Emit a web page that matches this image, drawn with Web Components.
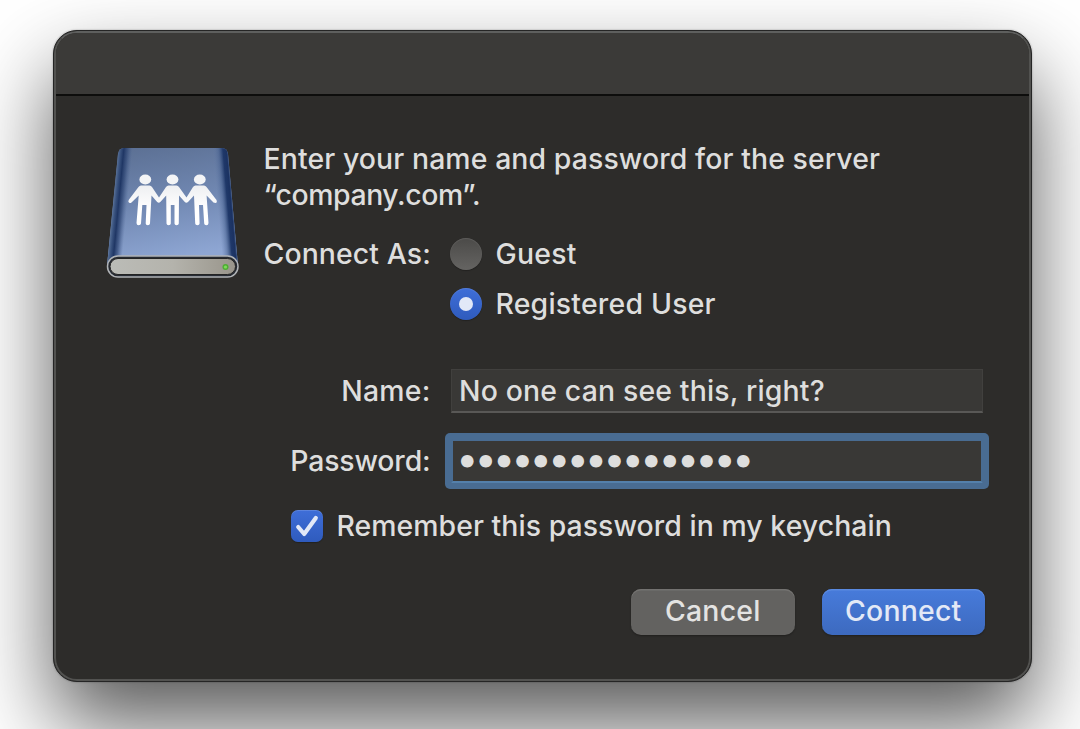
<!DOCTYPE html>
<html lang="en">
<head>
<meta charset="utf-8">
<title>Connect to Server</title>
<style>
html, body {
  margin: 0;
  width: 1080px;
  height: 729px;
  overflow: hidden;
  background: #fff;
}

body {
  font-family: Inter, "Liberation Sans", sans-serif;
  font-size: 28.4px;
  font-weight: 450;
  line-height: 36px;
  letter-spacing: .22px;
  color: #dededd;
  display: flex;
  align-items: flex-start;
}
</style>
</head>
<body>

<auth-dialog>
  <server-icon slot="icon"></server-icon>
  <div slot="message">
    <text-line style="--track: .1px">Enter your name and password for the server</text-line>
    <text-line style="--track: -.4px">“company.com”.</text-line>
  </div>
  <form-row label="Connect As:" style="--row: 50px; --label-track: .1px">
    <radio-option>Guest</radio-option>
  </form-row>
  <form-row style="--row: 50px">
    <radio-option checked>Registered User</radio-option>
  </form-row>
  <form-row label="Name:" style="--row: 44px; margin-top: 40px">
    <text-field>No one can see this, right?</text-field>
  </form-row>
  <form-row label="Password:" style="--row: 44px; --label-track: -.15px; margin-top: 26px">
    <text-field focused secure>••••••••••••••••</text-field>
  </form-row>
  <check-option>Remember this password in my keychain</check-option>
  <push-button slot="actions">Cancel</push-button>
  <push-button slot="actions" primary>Connect</push-button>
</auth-dialog>

<script>
// attach an open shadow root with the given markup
class BaseElement extends HTMLElement {
  constructor() {
    super();
    this.attachShadow({ mode: "open" });
    const template = document.createElement("template");
    template.innerHTML = this.constructor.markup;
    this.shadowRoot.appendChild(template.content.cloneNode(true));
  }
}

class AuthDialog extends BaseElement {
  static markup = `
<style>
:host {
  display: flex;
  flex-direction: column;
  flex: none;
  box-sizing: border-box;
  width: 979px;
  height: 651.5px;
  margin: 30px 0 0 53px;
  border: 1px solid #252525;
  border-radius: 24px;
  background: #2d2c2a;
  overflow: hidden;
  box-shadow: 0 0 2px rgba(0, 0, 0, .35), 0 42px 84px rgba(0, 0, 0, .65);
}

.frame {
  flex: 1;
  display: flex;
  flex-direction: column;
  border: 2px solid #525250;
  border-top-color: #5e5f5e;
  border-radius: 23px;
  overflow: hidden;
}

.titlebar {
  flex: none;
  height: 61px;
  background: #3b3a38;
  border-bottom: 2px solid #0d0d0c;
}

.content {
  display: grid;
  grid-template-columns: 133px 720px;
  column-gap: 24.5px;
  padding: 45px 0 0 50px;
}

.message {
  margin-bottom: 16px;
}

.actions {
  display: flex;
  justify-content: flex-end;
  gap: 27px;
  padding: 47px 44px 0 0;
}
</style>
<div class="frame">
  <div class="titlebar"></div>
  <div class="content">
    <slot name="icon"></slot>
    <div>
      <div class="message"><slot name="message"></slot></div>
      <slot></slot>
    </div>
  </div>
  <div class="actions"><slot name="actions"></slot></div>
</div>`;
}
customElements.define("auth-dialog", AuthDialog);

class TextLine extends BaseElement {
  static markup = `
<style>
:host {
  display: block;
  white-space: nowrap;
  letter-spacing: var(--track, 0);
}
</style>
<slot></slot>`;
}
customElements.define("text-line", TextLine);

class FormRow extends BaseElement {
  static markup = `
<style>
:host {
  display: grid;
  grid-template-columns: 167px 532px;
  column-gap: 20.5px;
  align-items: center;
  height: var(--row);
}

.label {
  text-align: right;
  white-space: nowrap;
  letter-spacing: var(--label-track, .22px);
}
</style>
<span class="label"></span>
<slot></slot>`;

  connectedCallback() {
    this.shadowRoot.querySelector(".label").textContent =
      this.getAttribute("label") || "";
  }
}
customElements.define("form-row", FormRow);

class RadioOption extends BaseElement {
  static markup = `
<style>
:host {
  display: flex;
  align-items: center;
  gap: 14px;
  margin-left: -1.5px;
  white-space: nowrap;
}

.dot {
  display: grid;
  place-items: center;
  width: 32px;
  height: 32px;
  border-radius: 50%;
  background: linear-gradient(#4b4a48, #656462);
  box-shadow: inset 0 1px 1px rgba(255, 255, 255, .1), 0 1px 1px rgba(0, 0, 0, .25);
}

:host([checked]) .dot {
  background: linear-gradient(#3f6ed8, #2f5bbd);
}

:host([checked]) .dot::after {
  content: "";
  width: 14px;
  height: 14px;
  border-radius: 50%;
  background: #e2e8f7;
}
</style>
<span class="dot"></span>
<span><slot></slot></span>`;
}
customElements.define("radio-option", RadioOption);

class TextField extends BaseElement {
  static markup = `
<style>
:host {
  display: flex;
  align-items: center;
  box-sizing: border-box;
  height: 44px;
  padding: 0 7px;
  background: #393836;
  border: 1px solid #41403e;
  border-bottom: 2px solid #595856;
  letter-spacing: .17px;
  white-space: nowrap;
}

:host([focused]) {
  border: 2px solid #496c92;
  border-bottom-color: #5480ab;
  box-shadow: 0 0 0 6px #496c92;
  border-radius: 1.5px;
}

:host([secure]) {
  padding: 0 3px 5px;
  font-size: 40px;
  font-weight: 400;
  letter-spacing: -4.1px;
}
</style>
<span><slot></slot></span>`;
}
customElements.define("text-field", TextField);

class CheckOption extends BaseElement {
  static markup = `
<style>
:host {
  display: flex;
  align-items: center;
  gap: 14px;
  height: 32px;
  margin: 27px 0 0 27px;
  letter-spacing: .06px;
  white-space: nowrap;
}

svg {
  flex: none;
  border-radius: 7px;
  background: linear-gradient(#3f6ed8, #2f5bbd);
  box-shadow: inset 0 1px 0 rgba(255, 255, 255, .15), 0 1px 1px rgba(0, 0, 0, .25);
}
</style>
<svg width="32" height="32" viewBox="0 0 32 32">
  <path d="M7.200 17L13.200 24L24.800 8" fill="none" stroke="#e2e8f7" stroke-width="4.200" stroke-linecap="round" stroke-linejoin="round"/>
</svg>
<span><slot></slot></span>`;
}
customElements.define("check-option", CheckOption);

class PushButton extends BaseElement {
  static markup = `
<style>
:host {
  display: flex;
  align-items: center;
  justify-content: center;
  box-sizing: border-box;
  width: 163.5px;
  height: 45.5px;
  padding-bottom: 2px;
  border-radius: 10px;
  background: #636260;
  color: #e3e3e2;
  box-shadow: inset 0 1.5px 0 #737270, 0 1px 2px rgba(0, 0, 0, .3);
}

:host([primary]) {
  background: linear-gradient(#477bdb, #3d6abf);
  color: #e3e9f6;
  box-shadow: inset 0 1.5px 0 #5a8ae0, 0 1px 2px rgba(0, 0, 0, .3);
}
</style>
<span><slot></slot></span>`;
}
customElements.define("push-button", PushButton);

class ServerIcon extends BaseElement {
  static markup = `
<style>
:host {
  display: block;
}

svg {
  display: block;
  margin-top: 4px;
}
</style>
<svg width="133" height="135" viewBox="106 145 133 135">
  <defs>
    <linearGradient id="cover" x1="0" y1="0" x2="0.2" y2="1">
      <stop offset="0" stop-color="#5a6e91"/>
      <stop offset=".5" stop-color="#6f86b0"/>
      <stop offset="1" stop-color="#8ea6d3"/>
    </linearGradient>
    <linearGradient id="left" gradientUnits="userSpaceOnUse" x1="112.500" y1="206" x2="127" y2="207.400">
      <stop offset="0" stop-color="#5a7399"/>
      <stop offset=".2" stop-color="#38517d"/>
      <stop offset=".4" stop-color="#1f3664"/>
      <stop offset=".65" stop-color="#2f4775" stop-opacity=".7"/>
      <stop offset="1" stop-color="#48618f" stop-opacity="0"/>
    </linearGradient>
    <linearGradient id="right" gradientUnits="userSpaceOnUse" x1="218" y1="209.300" x2="233.200" y2="208">
      <stop offset="0" stop-color="#5f78a6" stop-opacity="0"/>
      <stop offset=".35" stop-color="#46608f" stop-opacity=".5"/>
      <stop offset=".65" stop-color="#1f3869"/>
      <stop offset=".88" stop-color="#1b3262"/>
      <stop offset="1" stop-color="#435d8b"/>
    </linearGradient>
    <linearGradient id="base">
      <stop offset="0" stop-color="#bbbcb7"/>
      <stop offset=".5" stop-color="#b4b3ac"/>
      <stop offset="1" stop-color="#99958b"/>
    </linearGradient>
    <linearGradient id="people" x1="0" y1="0" x2="0" y2="1">
      <stop offset="0" stop-color="#eeeff2"/>
      <stop offset=".6" stop-color="#fff"/>
    </linearGradient>
    <clipPath id="shape">
      <path d="M124 148H222Q227 148 228 154L238 266H107L118 154Q119 148 124 148Z"/>
    </clipPath>
  </defs>
  <g clip-path="url(#shape)">
    <rect x="106" y="146" width="133" height="120" fill="url(#cover)"/>
    <rect x="106" y="146" width="60" height="120" fill="url(#left)"/>
    <rect x="180" y="146" width="59" height="120" fill="url(#right)"/>
  </g>
  <rect x="107.500" y="256" width="130.500" height="21" rx="10.500" fill="#272c34" stroke="#b0b3b6" stroke-width="1.500"/>
  <rect x="110" y="258.500" width="125.500" height="16" rx="8" fill="url(#base)" stroke="#242424" stroke-width="1"/>
  <circle cx="225.500" cy="267" r="3" fill="#4fae34"/>
  <circle cx="225.500" cy="267" r="1.600" fill="#7edc5a"/>
  <g fill="#f3f4f6">
    <ellipse cx="145.300" cy="179.500" rx="5.900" ry="5"/>
    <ellipse cx="172.500" cy="179.500" rx="5.900" ry="5"/>
    <ellipse cx="199.800" cy="179.500" rx="5.900" ry="5"/>
  </g>
  <path fill="url(#people)" d="
    M141 185.500H149.500Q151 185.500 152 187L159 197.500L166 187Q167 185.500 168.500 185.500H176.500
    Q178 185.500 179 187L186.500 197.500L193 187Q194 185.500 195.500 185.500H204
    Q205.500 185.500 206.500 187L216.500 200Q217.500 202.500 215.500 203L213.500 202.500L206.600 195.500
    L208.500 223Q208.500 225.300 206.300 225.300Q204.300 225.300 204.200 223.500L203 205H199L199.600 223.500
    Q199.500 225.300 197.400 225.300Q195.300 225.300 195.200 223.500L194 195.500L188 202Q186.300 203.500 184.800 202L179 195.500
    L178.800 223.500Q178.600 225.300 176.600 225.300Q174.600 225.300 174.500 223.500V205H170.800V223.500
    Q170.700 225.300 168.700 225.300Q166.600 225.300 166.500 223.500L166.200 195.500L160.300 202Q158.800 203.500 157.200 202L151.500 195.500
    L150 223.500Q149.800 225.300 147.800 225.300Q145.700 225.300 145.700 223.500L146.500 205H142.300L141 223.500
    Q140.800 225.300 138.700 225.300Q136.500 225.300 136.500 223L138.700 195.500L131.500 202.500Q129.500 203.800 128.500 202Q128 201 129 199.500L138.500 187Q139.500 185.500 141 185.500Z"/>
</svg>`;
}
customElements.define("server-icon", ServerIcon);
</script>
</body>
</html>
